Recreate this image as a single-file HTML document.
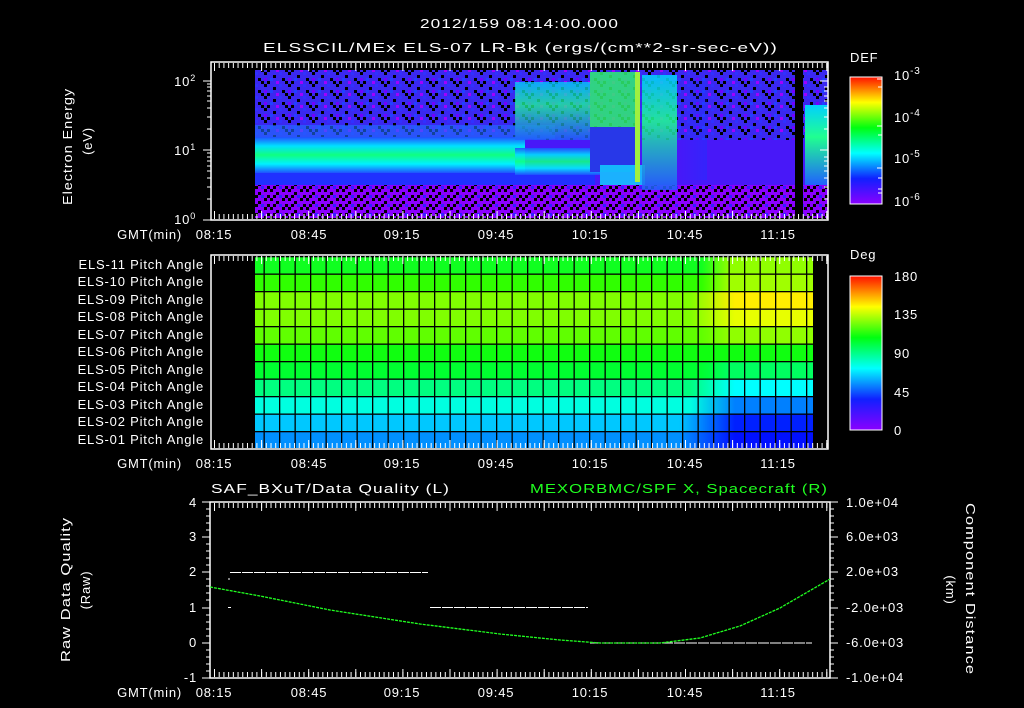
<!DOCTYPE html>
<html><head><meta charset="utf-8"><style>
html,body{margin:0;padding:0;background:#000;}
svg{display:block}
text{font-family:"Liberation Sans",sans-serif;fill:#fff;font-size:13px;letter-spacing:0.8px}
</style></head><body>
<svg width="1024" height="708" viewBox="0 0 1024 708" xmlns="http://www.w3.org/2000/svg">
<defs>
<linearGradient id="rb" x1="0" y1="1" x2="0" y2="0">
<stop offset="0" stop-color="#8a00ff"/><stop offset="0.2" stop-color="#1020ff"/><stop offset="0.4" stop-color="#00ffff"/><stop offset="0.6" stop-color="#00ff10"/><stop offset="0.8" stop-color="#ffff00"/><stop offset="1" stop-color="#ff1000"/>
</linearGradient>
<pattern id="spk" width="24" height="12" patternUnits="userSpaceOnUse">
<rect x="0" y="0" width="3" height="3" fill="#000"/><rect x="9" y="3" width="3" height="3" fill="#000"/><rect x="15" y="0" width="3" height="3" fill="#3030ff"/><rect x="18" y="6" width="3" height="3" fill="#000"/><rect x="3" y="9" width="3" height="3" fill="#000"/><rect x="12" y="9" width="3" height="3" fill="#a000ff"/><rect x="6" y="6" width="3" height="3" fill="#2040ff"/><rect x="21" y="9" width="3" height="3" fill="#000"/><rect x="0" y="6" width="3" height="3" fill="#7000ff"/>
</pattern>
<pattern id="spk2" width="18" height="9" patternUnits="userSpaceOnUse">
<rect x="0" y="0" width="3" height="3" fill="#000"/><rect x="6" y="3" width="3" height="3" fill="#000"/><rect x="12" y="0" width="3" height="3" fill="#000"/><rect x="15" y="6" width="3" height="3" fill="#000"/><rect x="3" y="6" width="3" height="3" fill="#000"/><rect x="9" y="6" width="3" height="3" fill="#3020ff"/>
</pattern>
<linearGradient id="band" x1="0" y1="0" x2="0" y2="1">
<stop offset="0" stop-color="#2050ff"/><stop offset="0.25" stop-color="#00e0ff"/><stop offset="0.5" stop-color="#10ff80"/><stop offset="0.75" stop-color="#00f0ff"/><stop offset="1" stop-color="#2050ff"/>
</linearGradient>
<linearGradient id="grnv" x1="0" y1="0" x2="0" y2="1">
<stop offset="0" stop-color="#00d0ff"/><stop offset="0.4" stop-color="#20ff90"/><stop offset="1" stop-color="#2060ff"/>
</linearGradient>
<linearGradient id="fadeL" x1="0" y1="0" x2="1" y2="0">
<stop offset="0" stop-color="#2030ff" stop-opacity="0"/><stop offset="1" stop-color="#2030ff" stop-opacity="1"/>
</linearGradient>
<pattern id="grid" x="279" y="256" width="15.5" height="17.5" patternUnits="userSpaceOnUse">
<rect x="0" y="0" width="1.3" height="17.5" fill="#000"/><rect x="0" y="0" width="15.5" height="1.3" fill="#000"/>
</pattern>
</defs>

<!-- titles -->
<text x="420" y="28" font-size="16" textLength="199" lengthAdjust="spacingAndGlyphs">2012/159 08:14:00.000</text>
<text x="263" y="52" font-size="16" textLength="515" lengthAdjust="spacingAndGlyphs">ELSSCIL/MEx ELS-07 LR-Bk  (ergs/(cm**2-sr-sec-eV))</text>

<!-- panel 1 spectrogram -->
<rect x="255" y="70" width="573" height="148" fill="#4818f8"/>
<rect x="255" y="70" width="573" height="70" fill="#3a28f0"/>
<rect x="255" y="70" width="573" height="70" fill="url(#spk)"/>
<rect x="255" y="185" width="573" height="33" fill="#8a00ff"/>
<rect x="255" y="185" width="573" height="33" fill="url(#spk2)"/>
<rect x="255" y="125" width="300" height="14" fill="#2070ff" opacity="0.6"/>
<rect x="255" y="137" width="270" height="36" fill="url(#band)"/>
<rect x="255" y="173" width="340" height="12" fill="#2030ff"/>
<rect x="515" y="148" width="85" height="27" fill="url(#band)" opacity="0.9"/>
<rect x="515" y="82" width="75" height="58" fill="url(#grnv)" opacity="0.75"/>
<rect x="590" y="72" width="45" height="55" fill="#30f070" opacity="0.85"/>
<rect x="590" y="127" width="50" height="45" fill="#2838e8"/>
<rect x="600" y="165" width="45" height="20" fill="#10d8ff" opacity="0.8"/>
<rect x="635" y="72" width="5" height="110" fill="#a0f040"/>
<rect x="642" y="75" width="35" height="115" fill="url(#grnv)" opacity="0.85"/>
<rect x="677" y="80" width="30" height="100" fill="url(#fadeL)" opacity="0.5"/>
<rect x="677" y="80" width="115" height="60" fill="url(#spk)" opacity="0.5"/>
<rect x="795" y="70" width="8" height="148" fill="#000"/>
<rect x="803" y="70" width="25" height="35" fill="url(#spk)"/>
<rect x="805" y="105" width="23" height="80" fill="url(#grnv)"/>

<!-- panel 1 frame -->
<rect x="211" y="62" width="617" height="158" fill="none" stroke="#fff" stroke-width="1.5"/>
<g stroke="#fff" stroke-width="1">
<path d="M211 81h-8M211 150h-8M211 220h-8M211 129h-4M211 117h-4M211 108h-4M211 101h-4M211 96h-4M211 91h-4M211 87h-4M211 84h-4M211 199h-4M211 187h-4M211 178h-4M211 171h-4M211 166h-4M211 161h-4M211 157h-4M211 153h-4"/>
<path d="M828 81h-8M828 150h-8M828 129h-4M828 117h-4M828 108h-4M828 101h-4M828 96h-4M828 91h-4M828 87h-4M828 199h-4M828 187h-4M828 178h-4M828 171h-4M828 166h-4M828 161h-4M828 157h-4"/>
<path d="M214 65.5H828M214 216.5H828" stroke-width="5" stroke-dasharray="1 3.71"/>
<path d="M214 67H828M214 215H828" stroke-width="8" stroke-dasharray="1 46.1"/>
</g>
<text x="196" y="86" text-anchor="end">10<tspan font-size="9" dy="-5">2</tspan></text>
<text x="196" y="155" text-anchor="end">10<tspan font-size="9" dy="-5">1</tspan></text>
<text x="196" y="224" text-anchor="end">10<tspan font-size="9" dy="-5">0</tspan></text>
<text transform="translate(72,205) rotate(-90)" font-size="14" textLength="117" lengthAdjust="spacingAndGlyphs">Electron Energy</text>
<text transform="translate(92,141) rotate(-90)" text-anchor="middle" font-size="14">(eV)</text>
<text x="182" y="239" text-anchor="end">GMT(min)</text>
<g text-anchor="middle"><text x="214" y="239">08:15</text><text x="309" y="239">08:45</text><text x="402" y="239">09:15</text><text x="496" y="239">09:45</text><text x="590" y="239">10:15</text><text x="685" y="239">10:45</text><text x="778" y="239">11:15</text></g>

<!-- colorbar 1 -->
<text x="850" y="62" font-size="15">DEF</text>
<rect x="850" y="77" width="32" height="127" fill="url(#rb)" stroke="#fff" stroke-width="1"/>
<g stroke="#fff"><path d="M882 79h-5M882 87h-4M882 126h-5M882 135h-4M882 168h-5M882 178h-4M882 189h-4M882 193h-4"/></g>
<text x="894" y="80" font-size="15">10<tspan font-size="10" dy="-6">-3</tspan></text>
<text x="894" y="122" font-size="15">10<tspan font-size="10" dy="-6">-4</tspan></text>
<text x="894" y="163" font-size="15">10<tspan font-size="10" dy="-6">-5</tspan></text>
<text x="894" y="206" font-size="15">10<tspan font-size="10" dy="-6">-6</tspan></text>

<!-- panel 2 -->
<defs>
<linearGradient id="r1"><stop offset="0.8" stop-color="#10ff20"/><stop offset="0.85" stop-color="#90ff00"/></linearGradient>
<linearGradient id="r2"><stop offset="0.8" stop-color="#30ff00"/><stop offset="0.85" stop-color="#a0ff00"/></linearGradient>
<linearGradient id="r3"><stop offset="0.78" stop-color="#80ff00"/><stop offset="0.86" stop-color="#ffee00"/></linearGradient>
<linearGradient id="r4"><stop offset="0.78" stop-color="#80ff00"/><stop offset="0.86" stop-color="#e8ff00"/></linearGradient>
<linearGradient id="r5"><stop offset="0.8" stop-color="#60ff00"/><stop offset="0.85" stop-color="#90ff00"/></linearGradient>
<linearGradient id="r6"><stop offset="0.8" stop-color="#10ff10"/><stop offset="0.85" stop-color="#10ff10"/></linearGradient>
<linearGradient id="r7"><stop offset="0.8" stop-color="#00ff30"/><stop offset="0.85" stop-color="#00ff60"/></linearGradient>
<linearGradient id="r8"><stop offset="0.78" stop-color="#00ff80"/><stop offset="0.86" stop-color="#00ffff"/></linearGradient>
<linearGradient id="r9"><stop offset="0.78" stop-color="#00ffe0"/><stop offset="0.86" stop-color="#0080ff"/></linearGradient>
<linearGradient id="r10"><stop offset="0.76" stop-color="#00c8ff"/><stop offset="0.86" stop-color="#0020ff"/></linearGradient>
<linearGradient id="r11"><stop offset="0.76" stop-color="#0090ff"/><stop offset="0.86" stop-color="#0010ff"/></linearGradient>
</defs>
<rect x="255" y="256" width="558" height="17.5" fill="url(#r1)"/>
<rect x="255" y="273.5" width="558" height="17.5" fill="url(#r2)"/>
<rect x="255" y="291" width="558" height="17.5" fill="url(#r3)"/>
<rect x="255" y="308.5" width="558" height="17.5" fill="url(#r4)"/>
<rect x="255" y="326" width="558" height="17.5" fill="url(#r5)"/>
<rect x="255" y="343.5" width="558" height="17.5" fill="url(#r6)"/>
<rect x="255" y="361" width="558" height="17.5" fill="url(#r7)"/>
<rect x="255" y="378.5" width="558" height="17.5" fill="url(#r8)"/>
<rect x="255" y="396" width="558" height="17.5" fill="url(#r9)"/>
<rect x="255" y="413.5" width="558" height="17.5" fill="url(#r10)"/>
<rect x="255" y="431" width="558" height="17" fill="url(#r11)"/>
<rect x="255" y="256" width="558" height="192" fill="url(#grid)"/>
<rect x="211" y="255" width="617" height="194" fill="none" stroke="#fff" stroke-width="1.5"/>
<g stroke="#fff"><path d="M214 258.5H828M214 445.5H828" stroke-width="5" stroke-dasharray="1 3.71"/>
<path d="M214 260H828M214 444H828" stroke-width="8" stroke-dasharray="1 46.1"/></g>
<g text-anchor="end" font-size="13">
<text x="204" y="269">ELS-11 Pitch Angle</text><text x="204" y="286">ELS-10 Pitch Angle</text><text x="204" y="304">ELS-09 Pitch Angle</text><text x="204" y="321">ELS-08 Pitch Angle</text><text x="204" y="339">ELS-07 Pitch Angle</text><text x="204" y="356">ELS-06 Pitch Angle</text><text x="204" y="374">ELS-05 Pitch Angle</text><text x="204" y="391">ELS-04 Pitch Angle</text><text x="204" y="409">ELS-03 Pitch Angle</text><text x="204" y="426">ELS-02 Pitch Angle</text><text x="204" y="444">ELS-01 Pitch Angle</text>
</g>
<text x="182" y="468" text-anchor="end">GMT(min)</text>
<g text-anchor="middle"><text x="214" y="468">08:15</text><text x="309" y="468">08:45</text><text x="402" y="468">09:15</text><text x="496" y="468">09:45</text><text x="590" y="468">10:15</text><text x="685" y="468">10:45</text><text x="778" y="468">11:15</text></g>
<text x="850" y="259" font-size="15">Deg</text>
<rect x="850" y="276" width="32" height="154" fill="url(#rb)" stroke="#fff" stroke-width="1"/>
<g font-size="15"><text x="894" y="281">180</text><text x="894" y="319">135</text><text x="894" y="358">90</text><text x="894" y="397">45</text><text x="894" y="435">0</text></g>

<!-- panel 3 -->
<text x="211" y="493" font-size="15" textLength="239" lengthAdjust="spacingAndGlyphs">SAF_BXuT/Data Quality (L)</text>
<text x="530" y="493" font-size="15" style="fill:#20ff20" textLength="298" lengthAdjust="spacingAndGlyphs">MEXORBMC/SPF X, Spacecraft (R)</text>
<rect x="210" y="502" width="620" height="176" fill="none" stroke="#fff" stroke-width="1.5"/>
<g stroke="#fff" stroke-width="1">
<path d="M210 502h-8M210 537h-8M210 572h-8M210 608h-8M210 643h-8M210 678h-8M210 509h-4M210 516h-4M210 523h-4M210 530h-4M210 544h-4M210 551h-4M210 558h-4M210 565h-4M210 579h-4M210 586h-4M210 593h-4M210 600h-4M210 615h-4M210 622h-4M210 629h-4M210 636h-4M210 650h-4M210 657h-4M210 664h-4M210 671h-4"/>
<path d="M830 502h8M830 537h8M830 572h8M830 608h8M830 643h8M830 678h8M830 509h4M830 516h4M830 523h4M830 530h4M830 544h4M830 551h4M830 558h4M830 565h4M830 579h4M830 586h4M830 593h4M830 600h4M830 615h4M830 622h4M830 629h4M830 636h4M830 650h4M830 657h4M830 664h4M830 671h4"/>
<path d="M214 505.5H830M214 674.5H830" stroke-width="5" stroke-dasharray="1 3.71"/>
<path d="M214 507H830M214 673H830" stroke-width="8" stroke-dasharray="1 46.1"/>
<path d="M230 572.5h198M430 607.5h158M590 643h222M228 607.5h3M229 578v2" stroke-dasharray="11 1"/>
</g>
<path d="M210 587 L260 596 L330 610 L420 624 L500 634 L560 640 L600 643 L660 643 L700 638 L740 626 L780 608 L830 579" fill="none" stroke="#20ff20" stroke-width="1.3" stroke-dasharray="3 1"/>
<g font-size="13" text-anchor="end"><text x="197" y="507">4</text><text x="197" y="541">3</text><text x="197" y="576">2</text><text x="197" y="612">1</text><text x="197" y="647">0</text><text x="197" y="682">-1</text></g>
<g font-size="13"><text x="846" y="507">1.0e+04</text><text x="846" y="541">6.0e+03</text><text x="846" y="576">2.0e+03</text><text x="846" y="612">-2.0e+03</text><text x="846" y="647">-6.0e+03</text><text x="846" y="682">-1.0e+04</text></g>
<text transform="translate(70,662) rotate(-90)" font-size="14" textLength="145" lengthAdjust="spacingAndGlyphs">Raw Data Quality</text>
<text transform="translate(90,590) rotate(-90)" text-anchor="middle" font-size="14">(Raw)</text>
<text transform="translate(966,503) rotate(90)" font-size="14" textLength="172" lengthAdjust="spacingAndGlyphs">Component Distance</text>
<text transform="translate(946,590) rotate(90)" text-anchor="middle" font-size="14">(km)</text>
<text x="182" y="697" text-anchor="end">GMT(min)</text>
<g text-anchor="middle"><text x="214" y="697">08:15</text><text x="309" y="697">08:45</text><text x="402" y="697">09:15</text><text x="496" y="697">09:45</text><text x="590" y="697">10:15</text><text x="685" y="697">10:45</text><text x="778" y="697">11:15</text></g>
</svg>
</body></html>
